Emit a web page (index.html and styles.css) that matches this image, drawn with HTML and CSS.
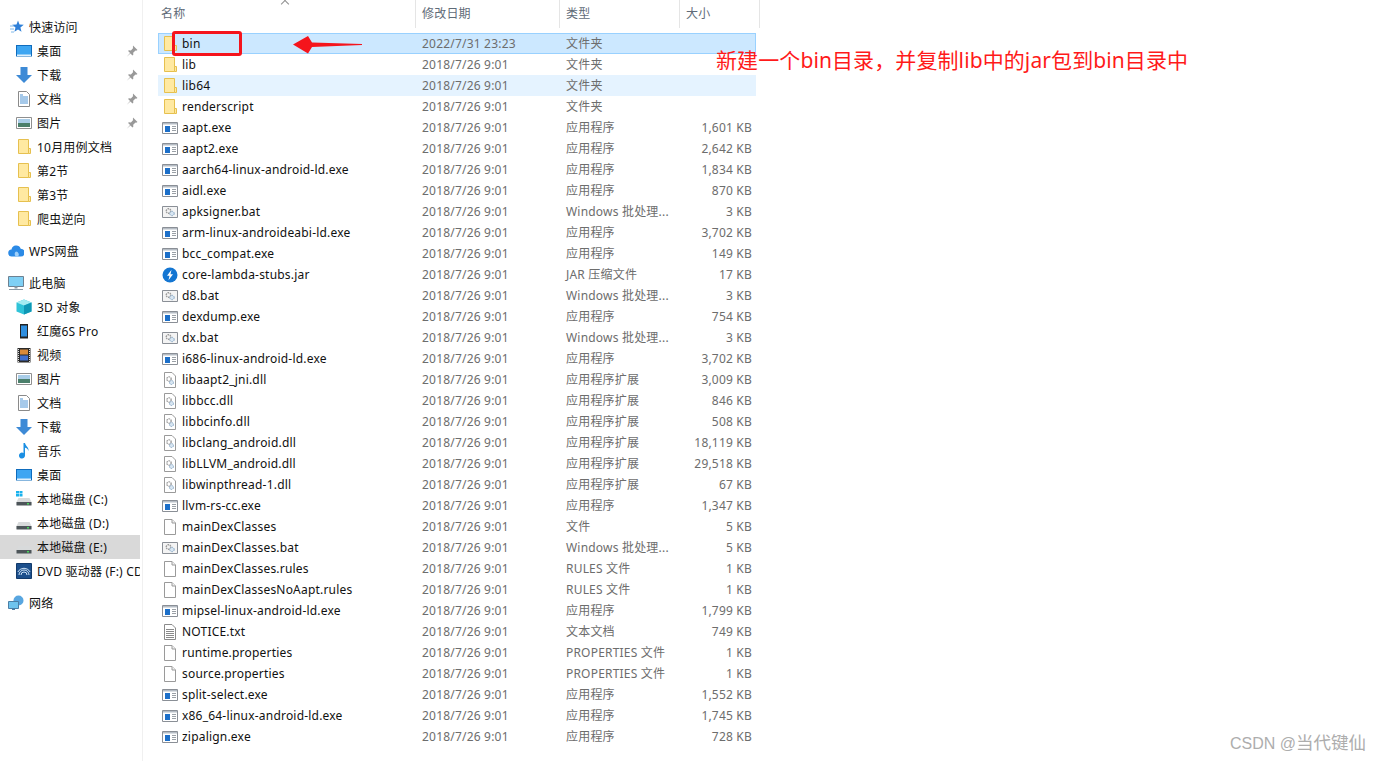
FILE: index.html
```html
<!DOCTYPE html>
<html>

	<head>
		<meta charset="UTF-8">
		<title>tools</title>
		<link rel="stylesheet" href="styles.css">
	</head>

	<body>
		<svg class="defs" width="0" height="0">
			<symbol id="i-folder" viewBox="0 0 16 16">
				<path d="M2.500.5h10v14h-10z" fill="#ffe9a1" stroke="#e6c04f"/>
				<path d="M12.500 9.500h2v5h-2z" fill="#ffe9a1" stroke="#e6c04f"/>
			</symbol>
			<symbol id="i-exe" viewBox="0 0 16 16">
				<path d="M.5 2.500h15v11h-15z" fill="#fff" stroke="#8a8f96"/>
				<path d="M1 3h14v1.500h-14z" fill="#b5bcc4"/>
				<path d="M3 6h5v6h-5z" fill="#1c6fc9"/>
				<path d="M10 6.500h4M10 8.500h4M10 10.500h4" stroke="#9aa0a6"/>
			</symbol>
			<symbol id="i-bat" viewBox="0 0 16 16">
				<path d="M.5 2.500h15v11h-15z" fill="#f4f4f4" stroke="#8a8f96"/>
				<circle cx="6.500" cy="7" r="2.300" fill="none" stroke="#9a9a9a" stroke-width="1.400" stroke-dasharray="1.500 .7"/>
				<circle cx="10" cy="9.500" r="2.200" fill="#d8e6f2" stroke="#86a6c4" stroke-dasharray="1.500 .7"/>
			</symbol>
			<symbol id="i-jar" viewBox="0 0 16 16">
				<circle cx="8" cy="8" r="7.500" fill="#1476d2"/>
				<path d="M9.500 2.800l-4.500 6h2.500l-1 4.400 4.500-6h-2.500z" fill="#fff"/>
			</symbol>
			<symbol id="i-file" viewBox="0 0 16 16">
				<path d="M2.500.5h7.500l3.500 3.500v11.500h-11z" fill="#fff" stroke="#9a9a9a"/>
				<path d="M10 .5v3.500h3.500" fill="#f2f2f2" stroke="#9a9a9a"/>
			</symbol>
			<symbol id="i-txt" viewBox="0 0 16 16">
				<path d="M2.500.5h7.500l3.500 3.500v11.500h-11z" fill="#fff" stroke="#8a8a8a"/>
				<path d="M4 5.500h8M4 7.500h8M4 9.500h8M4 11.500h8M4 13.500h8" stroke="#8a8a8a"/>
			</symbol>
			<symbol id="i-dll" viewBox="0 0 16 16">
				<path d="M2.500.5h7.500l3.500 3.500v11.500h-11z" fill="#fff" stroke="#9a9a9a"/>
				<circle cx="7" cy="7" r="2.200" fill="none" stroke="#9a9a9a" stroke-width="1.300" stroke-dasharray="1.500 .7"/>
				<circle cx="9.500" cy="10.500" r="2" fill="#d8e6f2" stroke="#86a6c4" stroke-dasharray="1.500 .7"/>
			</symbol>
			<symbol id="i-star" viewBox="0 0 16 16">
				<path d="M10 1.500l1.500 4 4.300.3-3.400 2.700 1.100 4.200-3.500-2.300-3.600 2.300 1.100-4.200-3.400-2.700 4.400-.3z" fill="#2f80d8"/>
				<path d="M2 7h4M2 10h4M3 13h3" stroke="#7fb8ea"/>
			</symbol>
			<symbol id="i-desktop" viewBox="0 0 16 16">
				<path d="M0 2h16v11.500h-16z" fill="#0f6cbd"/>
				<path d="M1 3h14v9h-14z" fill="#3ea6f2"/>
				<path d="M1 11.500h14v1.500h-14z" fill="#dff0fd"/>
			</symbol>
			<symbol id="i-down" viewBox="0 0 16 16">
				<path d="M4.500 0h7v8h4.500l-8 8-8-8h4.500z" fill="#3d8ad6"/>
			</symbol>
			<symbol id="i-doc" viewBox="0 0 16 16">
				<path d="M2.500.5h8l3 3v12h-11z" fill="#fff" stroke="#8a8a8a"/>
				<path d="M4 4h3M4 6h8M4 8h8M4 10h8M4 12h8" stroke="#4c93d4"/>
			</symbol>
			<symbol id="i-pic" viewBox="0 0 16 16">
				<path d="M.5 2.500h15v11h-15z" fill="#fff" stroke="#8f8f8f"/>
				<path d="M2 4h12v4h-12z" fill="#a9cde8"/>
				<path d="M2 8h12v4h-12z" fill="#4b7f6b"/>
			</symbol>
			<symbol id="i-cloud" viewBox="0 0 16 16">
				<path d="M4 13.500a3.500 3.500 0 0 1-.5-7 4.800 4.800 0 0 1 9.200-.8 3.900 3.900 0 0 1-.2 7.800z" fill="#2b8ae6"/>
				<path d="M8 13.500a3 3 0 0 1 0-5 3 3 0 0 1 2 5z" fill="#9fd0fa"/>
			</symbol>
			<symbol id="i-pc" viewBox="0 0 16 16">
				<path d="M.5 1.500h15v10h-15z" fill="#7fd0f5" stroke="#6d8191"/>
				<path d="M6.500 11.500h3v2h-3z" fill="#8a9aa6"/>
				<path d="M1 14.500h14" stroke="#8a9aa6"/>
			</symbol>
			<symbol id="i-cube" viewBox="0 0 16 16">
				<path d="M8 .5l7.500 3v9l-7.500 3-7.500-3v-9z" fill="#2fc3d8"/>
				<path d="M8 .5l7.500 3-7.500 3-7.500-3z" fill="#a5ecf2"/>
				<path d="M8 6.500l7.500-3v9l-7.500 3z" fill="#0f97b5"/>
			</symbol>
			<symbol id="i-phone" viewBox="0 0 16 16">
				<path d="M4 1h8v14.500h-8z" fill="#222"/>
				<path d="M5 2.500h6v11h-6z" fill="#2f8fe0"/>
			</symbol>
			<symbol id="i-film" viewBox="0 0 16 16">
				<path d="M1.500 1h13v14.500h-13z" fill="#2a2a2a"/>
				<path d="M4 2.500h8v5h-8z" fill="#d98a3a"/>
				<path d="M4 8.500h8v5h-8z" fill="#3f6fd0"/>
				<path d="M2.500 2v13M13.500 2v13" stroke="#ddd" stroke-dasharray="1 1"/>
			</symbol>
			<symbol id="i-music" viewBox="0 0 16 16">
				<path d="M7.500 0h1.500c.5 3 4 4 3.500 8-.5-2-2-3-3.500-3.300v7.800a3 3 0 1 1-1.500-2.500z" fill="#1b8fe3"/>
			</symbol>
			<symbol id="i-disk" viewBox="0 0 16 16">
				<path d="M2.500 7h11l2 4v3h-15v-3z" fill="#d8dadb"/>
				<path d="M.5 11h15v3.500h-15z" fill="#4d5559"/>
				<path d="M11 12h2v1.500h-2z" fill="#49d65c"/>
			</symbol>
			<symbol id="i-disk-win" viewBox="0 0 16 16">
				<use href="#i-disk"/>
				<path d="M0 0h3v2.500h-3zM3.500 0h3v2.500h-3zM0 3h3v2.500h-3zM3.500 3h3v2.500h-3z" fill="#19b2ee"/>
			</symbol>
			<symbol id="i-dvd" viewBox="0 0 16 16">
				<path d="M.5.500h15v15h-15z" fill="#1c4f8c" stroke="#123a6b"/>
				<path d="M3 12a5 5 0 0 1 10 0M5 12a3 3 0 0 1 6 0M1.800 9a7 7 0 0 1 12.400 0" fill="none" stroke="#cfe4f7"/>
			</symbol>
			<symbol id="i-net" viewBox="0 0 16 16">
				<circle cx="10.500" cy="5.500" r="5" fill="#58a6e0"/>
				<path d="M.5 6.500h10v7h-10z" fill="#6fc4ee" stroke="#4b7fa6"/>
				<path d="M4 13.500h3v1.500h-3z" fill="#4b7fa6"/>
			</symbol>
			<symbol id="i-pin" viewBox="0 0 12 12">
				<path d="M7 .5l4.500 4.500-1.300.7-.7-.3-2.300 2.300.1 2.100-.8.700-2.100-2.100-3.600 3.400 3.300-3.700-2-2 .7-.8 2.100.1 2.300-2.300-.3-.7z" fill="#999"/>
			</symbol>
		</svg>

		<div class="app">
			<nav class="nav">
				<div class="group">
					<div class="item top"><svg class="ico"><use href="#i-star"/></svg><span>快速访问</span></div>
					<div class="item"><svg class="ico"><use href="#i-desktop"/></svg><span>桌面</span><svg class="pin"><use href="#i-pin"/></svg></div>
					<div class="item"><svg class="ico"><use href="#i-down"/></svg><span>下载</span><svg class="pin"><use href="#i-pin"/></svg></div>
					<div class="item"><svg class="ico"><use href="#i-doc"/></svg><span>文档</span><svg class="pin"><use href="#i-pin"/></svg></div>
					<div class="item"><svg class="ico"><use href="#i-pic"/></svg><span>图片</span><svg class="pin"><use href="#i-pin"/></svg></div>
					<div class="item"><svg class="ico"><use href="#i-folder"/></svg><span>10月用例文档</span></div>
					<div class="item"><svg class="ico"><use href="#i-folder"/></svg><span>第2节</span></div>
					<div class="item"><svg class="ico"><use href="#i-folder"/></svg><span>第3节</span></div>
					<div class="item"><svg class="ico"><use href="#i-folder"/></svg><span>爬虫逆向</span></div>
				</div>
				<div class="group">
					<div class="item top"><svg class="ico"><use href="#i-cloud"/></svg><span>WPS网盘</span></div>
				</div>
				<div class="group">
					<div class="item top"><svg class="ico"><use href="#i-pc"/></svg><span>此电脑</span></div>
					<div class="item"><svg class="ico"><use href="#i-cube"/></svg><span>3D 对象</span></div>
					<div class="item"><svg class="ico"><use href="#i-phone"/></svg><span>红魔6S Pro</span></div>
					<div class="item"><svg class="ico"><use href="#i-film"/></svg><span>视频</span></div>
					<div class="item"><svg class="ico"><use href="#i-pic"/></svg><span>图片</span></div>
					<div class="item"><svg class="ico"><use href="#i-doc"/></svg><span>文档</span></div>
					<div class="item"><svg class="ico"><use href="#i-down"/></svg><span>下载</span></div>
					<div class="item"><svg class="ico"><use href="#i-music"/></svg><span>音乐</span></div>
					<div class="item"><svg class="ico"><use href="#i-desktop"/></svg><span>桌面</span></div>
					<div class="item"><svg class="ico"><use href="#i-disk-win"/></svg><span>本地磁盘 (C:)</span></div>
					<div class="item"><svg class="ico"><use href="#i-disk"/></svg><span>本地磁盘 (D:)</span></div>
					<div class="item active"><svg class="ico"><use href="#i-disk"/></svg><span>本地磁盘 (E:)</span></div>
					<div class="item"><svg class="ico"><use href="#i-dvd"/></svg><span>DVD 驱动器 (F:) CD</span></div>
				</div>
				<div class="group">
					<div class="item top"><svg class="ico"><use href="#i-net"/></svg><span>网络</span></div>
				</div>
			</nav>

			<main class="files">
				<div class="head">
					<div class="col">名称<i class="caret"></i></div>
					<div class="col">修改日期</div>
					<div class="col">类型</div>
					<div class="col">大小</div>
				</div>

				<div class="list">
					<div class="row sel"><div class="name"><svg class="ico"><use href="#i-folder"/></svg>bin</div><div>2022/7/31 23:23</div><div>文件夹</div><div class="size"></div></div>
					<div class="row"><div class="name"><svg class="ico"><use href="#i-folder"/></svg>lib</div><div>2018/7/26 9:01</div><div>文件夹</div><div class="size"></div></div>
					<div class="row hover"><div class="name"><svg class="ico"><use href="#i-folder"/></svg>lib64</div><div>2018/7/26 9:01</div><div>文件夹</div><div class="size"></div></div>
					<div class="row"><div class="name"><svg class="ico"><use href="#i-folder"/></svg>renderscript</div><div>2018/7/26 9:01</div><div>文件夹</div><div class="size"></div></div>
					<div class="row"><div class="name"><svg class="ico"><use href="#i-exe"/></svg>aapt.exe</div><div>2018/7/26 9:01</div><div>应用程序</div><div class="size">1,601 KB</div></div>
					<div class="row"><div class="name"><svg class="ico"><use href="#i-exe"/></svg>aapt2.exe</div><div>2018/7/26 9:01</div><div>应用程序</div><div class="size">2,642 KB</div></div>
					<div class="row"><div class="name"><svg class="ico"><use href="#i-exe"/></svg>aarch64-linux-android-ld.exe</div><div>2018/7/26 9:01</div><div>应用程序</div><div class="size">1,834 KB</div></div>
					<div class="row"><div class="name"><svg class="ico"><use href="#i-exe"/></svg>aidl.exe</div><div>2018/7/26 9:01</div><div>应用程序</div><div class="size">870 KB</div></div>
					<div class="row"><div class="name"><svg class="ico"><use href="#i-bat"/></svg>apksigner.bat</div><div>2018/7/26 9:01</div><div>Windows 批处理...</div><div class="size">3 KB</div></div>
					<div class="row"><div class="name"><svg class="ico"><use href="#i-exe"/></svg>arm-linux-androideabi-ld.exe</div><div>2018/7/26 9:01</div><div>应用程序</div><div class="size">3,702 KB</div></div>
					<div class="row"><div class="name"><svg class="ico"><use href="#i-exe"/></svg>bcc_compat.exe</div><div>2018/7/26 9:01</div><div>应用程序</div><div class="size">149 KB</div></div>
					<div class="row"><div class="name"><svg class="ico"><use href="#i-jar"/></svg>core-lambda-stubs.jar</div><div>2018/7/26 9:01</div><div>JAR 压缩文件</div><div class="size">17 KB</div></div>
					<div class="row"><div class="name"><svg class="ico"><use href="#i-bat"/></svg>d8.bat</div><div>2018/7/26 9:01</div><div>Windows 批处理...</div><div class="size">3 KB</div></div>
					<div class="row"><div class="name"><svg class="ico"><use href="#i-exe"/></svg>dexdump.exe</div><div>2018/7/26 9:01</div><div>应用程序</div><div class="size">754 KB</div></div>
					<div class="row"><div class="name"><svg class="ico"><use href="#i-bat"/></svg>dx.bat</div><div>2018/7/26 9:01</div><div>Windows 批处理...</div><div class="size">3 KB</div></div>
					<div class="row"><div class="name"><svg class="ico"><use href="#i-exe"/></svg>i686-linux-android-ld.exe</div><div>2018/7/26 9:01</div><div>应用程序</div><div class="size">3,702 KB</div></div>
					<div class="row"><div class="name"><svg class="ico"><use href="#i-dll"/></svg>libaapt2_jni.dll</div><div>2018/7/26 9:01</div><div>应用程序扩展</div><div class="size">3,009 KB</div></div>
					<div class="row"><div class="name"><svg class="ico"><use href="#i-dll"/></svg>libbcc.dll</div><div>2018/7/26 9:01</div><div>应用程序扩展</div><div class="size">846 KB</div></div>
					<div class="row"><div class="name"><svg class="ico"><use href="#i-dll"/></svg>libbcinfo.dll</div><div>2018/7/26 9:01</div><div>应用程序扩展</div><div class="size">508 KB</div></div>
					<div class="row"><div class="name"><svg class="ico"><use href="#i-dll"/></svg>libclang_android.dll</div><div>2018/7/26 9:01</div><div>应用程序扩展</div><div class="size">18,119 KB</div></div>
					<div class="row"><div class="name"><svg class="ico"><use href="#i-dll"/></svg>libLLVM_android.dll</div><div>2018/7/26 9:01</div><div>应用程序扩展</div><div class="size">29,518 KB</div></div>
					<div class="row"><div class="name"><svg class="ico"><use href="#i-dll"/></svg>libwinpthread-1.dll</div><div>2018/7/26 9:01</div><div>应用程序扩展</div><div class="size">67 KB</div></div>
					<div class="row"><div class="name"><svg class="ico"><use href="#i-exe"/></svg>llvm-rs-cc.exe</div><div>2018/7/26 9:01</div><div>应用程序</div><div class="size">1,347 KB</div></div>
					<div class="row"><div class="name"><svg class="ico"><use href="#i-file"/></svg>mainDexClasses</div><div>2018/7/26 9:01</div><div>文件</div><div class="size">5 KB</div></div>
					<div class="row"><div class="name"><svg class="ico"><use href="#i-bat"/></svg>mainDexClasses.bat</div><div>2018/7/26 9:01</div><div>Windows 批处理...</div><div class="size">5 KB</div></div>
					<div class="row"><div class="name"><svg class="ico"><use href="#i-file"/></svg>mainDexClasses.rules</div><div>2018/7/26 9:01</div><div>RULES 文件</div><div class="size">1 KB</div></div>
					<div class="row"><div class="name"><svg class="ico"><use href="#i-file"/></svg>mainDexClassesNoAapt.rules</div><div>2018/7/26 9:01</div><div>RULES 文件</div><div class="size">1 KB</div></div>
					<div class="row"><div class="name"><svg class="ico"><use href="#i-exe"/></svg>mipsel-linux-android-ld.exe</div><div>2018/7/26 9:01</div><div>应用程序</div><div class="size">1,799 KB</div></div>
					<div class="row"><div class="name"><svg class="ico"><use href="#i-txt"/></svg>NOTICE.txt</div><div>2018/7/26 9:01</div><div>文本文档</div><div class="size">749 KB</div></div>
					<div class="row"><div class="name"><svg class="ico"><use href="#i-file"/></svg>runtime.properties</div><div>2018/7/26 9:01</div><div>PROPERTIES 文件</div><div class="size">1 KB</div></div>
					<div class="row"><div class="name"><svg class="ico"><use href="#i-file"/></svg>source.properties</div><div>2018/7/26 9:01</div><div>PROPERTIES 文件</div><div class="size">1 KB</div></div>
					<div class="row"><div class="name"><svg class="ico"><use href="#i-exe"/></svg>split-select.exe</div><div>2018/7/26 9:01</div><div>应用程序</div><div class="size">1,552 KB</div></div>
					<div class="row"><div class="name"><svg class="ico"><use href="#i-exe"/></svg>x86_64-linux-android-ld.exe</div><div>2018/7/26 9:01</div><div>应用程序</div><div class="size">1,745 KB</div></div>
					<div class="row"><div class="name"><svg class="ico"><use href="#i-exe"/></svg>zipalign.exe</div><div>2018/7/26 9:01</div><div>应用程序</div><div class="size">728 KB</div></div>
				</div>
			</main>
		</div>

		<!-- annotations drawn over the screenshot -->
		<div class="mark"></div>
		<svg class="arrow" width="70" height="18" viewBox="0 0 70 18"><path d="M0 8.500L15 0l4 6.500 50 1.500v1l-50 2-4 6.500z" fill="#f5141c"/></svg>
		<div class="note">新建一个bin目录，并复制lib中的jar包到bin目录中</div>
		<div class="watermark">CSDN @<span class="wm-name">当代键仙</span></div>
	</body>

</html>
```
FILE: styles.css
```css
* {
	margin: 0;
	padding: 0;
	box-sizing: border-box;
}

html,
body {
	height: 100%;
	overflow: hidden;
	background: #fff;
}

body {
	position: relative;
	font-family: "Noto Sans", "Noto Sans CJK SC", sans-serif;
	font-size: 12px;
	letter-spacing: .2px;
	color: #111;
}

.defs {
	position: absolute;
}

.app {
	display: flex;
	height: 761px;
}

/* left tree */
.nav {
	flex: none;
	width: 143px;
	padding: 15px 2px 0 0;
	border-right: 1px solid #f0f0f0;
	overflow: hidden;
}

.group {
	margin-bottom: 8px;
}

.item {
	display: flex;
	align-items: center;
	height: 24px;
	padding-left: 16px;
	white-space: nowrap;
	overflow: hidden;
}

.item .ico {
	flex: none;
	width: 16px;
	height: 16px;
	margin-right: 5px;
}

.item.top {
	padding-left: 8px;
}

.item.active {
	background: #d9d9d9;
}

.pin {
	flex: none;
	width: 12px;
	height: 12px;
	margin-left: auto;
	margin-right: 2px;
}

/* right list */
.files {
	flex: 1;
}

.head {
	display: grid;
	grid-template-columns: 261px 144px 120px 80px;
	margin-left: 12px;
	width: 605px;
	height: 26px;
	color: #5f6b78;
}

.col {
	position: relative;
	padding-left: 6px;
	line-height: 28px;
	border-right: 1px solid #e5e5e5;
}

.caret {
	position: absolute;
	left: 127px;
	top: 1px;
	width: 6px;
	height: 6px;
	border-left: 1px solid #8f8f8f;
	border-top: 1px solid #8f8f8f;
	transform: rotate(45deg);
}

.list {
	margin: 7px 0 0 15px;
	width: 598px;
}

.row {
	display: grid;
	grid-template-columns: 264px 144px 120px 70px;
	height: 21px;
	line-height: 21px;
	color: #6d6d6d;
	white-space: nowrap;
}

.name {
	display: flex;
	align-items: center;
	padding-left: 4px;
	color: #111;
}

.name .ico {
	flex: none;
	width: 16px;
	height: 16px;
	margin-right: 4px;
}

.size {
	text-align: right;
	padding-right: 4px;
}

.row.sel {
	background: #cce8ff;
	box-shadow: inset 0 0 0 1px #99d1ff;
}

.row.hover {
	background: #e5f3ff;
}

/* red marks */
.mark {
	position: absolute;
	left: 172px;
	top: 31px;
	width: 70px;
	height: 25px;
	border: 3px solid #f5141c;
	border-radius: 3px;
}

.arrow {
	position: absolute;
	left: 293px;
	top: 36px;
}

.note {
	position: absolute;
	left: 716px;
	top: 46px;
	font-size: 21px;
	line-height: 28px;
	letter-spacing: .1px;
	color: #ff1a1a;
	white-space: nowrap;
}

.watermark {
	position: absolute;
	left: 1230px;
	top: 732px;
	font-family: "Liberation Sans", "Noto Sans CJK SC", sans-serif;
	font-size: 16px;
	line-height: 22px;
	letter-spacing: 0;
	color: #adadad;
	white-space: nowrap;
}

.wm-name {
	font-size: 17.5px;
}
```
